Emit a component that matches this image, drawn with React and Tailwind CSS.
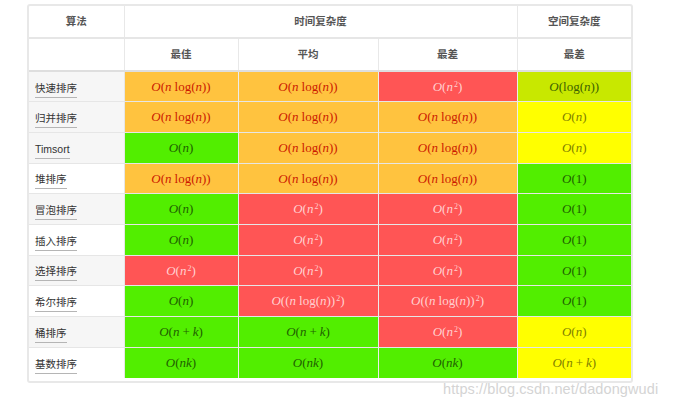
import React from 'react';

const I = ({ children }) => <i className="italic">{children}</i>;

const Sup = ({ children }) => <sup className="text-[8px] ml-[1px]">{children}</sup>;

// nomes das formulas
const formulas = {
  nlogn: (
    <>
      <I>O</I>(<I>n</I>
      <span className="ml-[3px]">log</span>(<I>n</I>))
    </>
  ),
  n: (
    <>
      <I>O</I>(<I>n</I>)
    </>
  ),
  n2: (
    <>
      <I>O</I>(<I>n</I>
      <Sup>2</Sup>)
    </>
  ),
  logn: (
    <>
      <I>O</I>(log(<I>n</I>))
    </>
  ),
  one: (
    <>
      <I>O</I>(1)
    </>
  ),
  nlogn2: (
    <>
      <I>O</I>((<I>n</I>
      <span className="ml-[3px]">log</span>(<I>n</I>))
      <Sup>2</Sup>)
    </>
  ),
  nk: (
    <>
      <I>O</I>(<I>n</I>
      <span className="mx-[3px] not-italic">+</span>
      <I>k</I>)
    </>
  ),
  nkm: (
    <>
      <I>O</I>(<I>nk</I>)
    </>
  ),
};

const colors = {
  orange: 'bg-[#ffc33f] text-[#cc1a00]',
  red: 'bg-[#ff5555] text-[#ffd0d0]',
  green: 'bg-[#52ee00] text-[#1f5f00]',
  yellow: 'bg-[#ffff00] text-[#7f7f00]',
  lime: 'bg-[#c8e800] text-[#3d6200]',
};

const rows = [
  { name: '快速排序', gray: true, cells: [['nlogn', 'orange'], ['nlogn', 'orange'], ['n2', 'red'], ['logn', 'lime']] },
  { name: '归并排序', gray: true, cells: [['nlogn', 'orange'], ['nlogn', 'orange'], ['nlogn', 'orange'], ['n', 'yellow']] },
  { name: 'Timsort', gray: true, cells: [['n', 'green'], ['nlogn', 'orange'], ['nlogn', 'orange'], ['n', 'yellow']] },
  { name: '堆排序', gray: false, cells: [['nlogn', 'orange'], ['nlogn', 'orange'], ['nlogn', 'orange'], ['one', 'green']] },
  { name: '冒泡排序', gray: true, cells: [['n', 'green'], ['n2', 'red'], ['n2', 'red'], ['one', 'green']] },
  { name: '插入排序', gray: false, cells: [['n', 'green'], ['n2', 'red'], ['n2', 'red'], ['one', 'green']] },
  { name: '选择排序', gray: true, cells: [['n2', 'red'], ['n2', 'red'], ['n2', 'red'], ['one', 'green']] },
  { name: '希尔排序', gray: false, cells: [['n', 'green'], ['nlogn2', 'red'], ['nlogn2', 'red'], ['one', 'green']] },
  { name: '桶排序', gray: true, cells: [['nk', 'green'], ['nk', 'green'], ['n2', 'red'], ['n', 'yellow']] },
  { name: '基数排序', gray: false, cells: [['nkm', 'green'], ['nkm', 'green'], ['nkm', 'green'], ['nk', 'yellow']] },
];

const App = () => {
  return (
    <div className="relative w-[684px] h-[404px] bg-white overflow-hidden font-['Liberation_Sans','Noto_Sans_CJK_SC',sans-serif]">
      <div className="ml-[27px] mt-[4px] w-[606px] h-[379px] border-2 border-[#e8e8e8] rounded-[3px]">
        <table className="w-[602px] table-fixed border-collapse">
          <colgroup>
            <col className="w-[95px]" />
            <col className="w-[114px]" />
            <col className="w-[140px]" />
            <col className="w-[139px]" />
            <col className="w-[114px]" />
          </colgroup>
          <thead className="text-[10.5px] font-bold text-[#555]">
            <tr className="h-[32px] border-b-2 border-[#e6e6e6]">
              <th className="border border-[#e8e8e8] border-t-0 border-l-0">算法</th>
              <th colSpan={3} className="border border-[#e8e8e8] border-t-0">时间复杂度</th>
              <th className="border border-[#e8e8e8] border-t-0 border-r-0">空间复杂度</th>
            </tr>
            <tr className="h-[33px] border-b-2 border-[#dedede]">
              <th className="border-r border-[#e8e8e8]"></th>
              <th className="border-r border-[#e8e8e8]">最佳</th>
              <th className="border-r border-[#e8e8e8]">平均</th>
              <th className="border-r border-[#e8e8e8]">最差</th>
              <th>最差</th>
            </tr>
          </thead>
          <tbody>
            {rows.map((row, i) => (
              <tr key={i} className="h-[30.7px] border-b border-[#e6e6e6] last:border-b-0">
                <td className={`pl-[6px] border-r border-[#e6e6e6] ${row.gray ? 'bg-[#f6f6f6]' : 'bg-white'}`}>
                  <span className="inline-block text-[10.5px] leading-[13px] text-[#333] border-b border-[#b5b5b5] pb-[2px]">
                    {row.name}
                  </span>
                </td>
                {row.cells.map(([f, c], j) => (
                  <td
                    key={j}
                    className={`text-center text-[13px] font-['Liberation_Serif',serif] border-r border-[#ececec] last:border-r-0 ${colors[c]}`}
                  >
                    {formulas[f]}
                  </td>
                ))}
              </tr>
            ))}
          </tbody>
        </table>
      </div>
      <div className="absolute left-[443px] top-[379px] text-[14.5px] text-[#d4d4d4] font-['Liberation_Sans',sans-serif] tracking-[0.1px]">
        https://blog.csdn.net/dadongwudi
      </div>
    </div>
  );
};

export default App;
